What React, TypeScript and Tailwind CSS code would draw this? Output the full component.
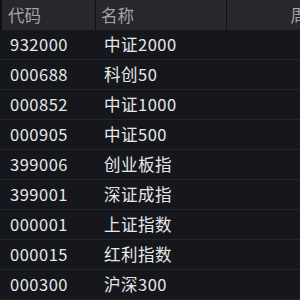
import React from 'react';

const rows = [
  { code: '932000', name: '中证2000' },
  { code: '000688', name: '科创50' },
  { code: '000852', name: '中证1000' },
  { code: '000905', name: '中证500' },
  { code: '399006', name: '创业板指' },
  { code: '399001', name: '深证成指' },
  { code: '000001', name: '上证指数' },
  { code: '000015', name: '红利指数' },
  { code: '000300', name: '沪深300' },
];

export default function App() {
  return (
    <div
      className="w-[300px] h-[300px] overflow-hidden bg-[#15171c] text-[16.5px]"
      style={{ fontFamily: '"Noto Sans CJK SC", "Noto Sans", sans-serif' }}
    >
      {/* Header */}
      <div className="flex h-[30px] bg-[#27272c] text-[#a3a3a8] border-l-2 border-[#111214]">
        <div className="w-[94px] pl-[6px] flex items-center border-r border-[#111214]">代码</div>
        <div className="w-[131px] pl-[5px] flex items-center border-r border-[#111214]">名称</div>
        <div className="flex-1 flex items-center justify-end whitespace-nowrap overflow-hidden">
          <span className="-mr-[7px]">周</span>
        </div>
      </div>

      {/* Rows */}
      {rows.map(r => (
        <div key={r.code} className="flex h-[30px] border-b border-[#23262c] text-[#e8e8ea] tracking-[0.5px]">
          <div className="w-[96px] pl-[10px] flex items-center">{r.code}</div>
          <div className="flex-1 pl-[8px] flex items-center">{r.name}</div>
        </div>
      ))}
    </div>
  );
}
